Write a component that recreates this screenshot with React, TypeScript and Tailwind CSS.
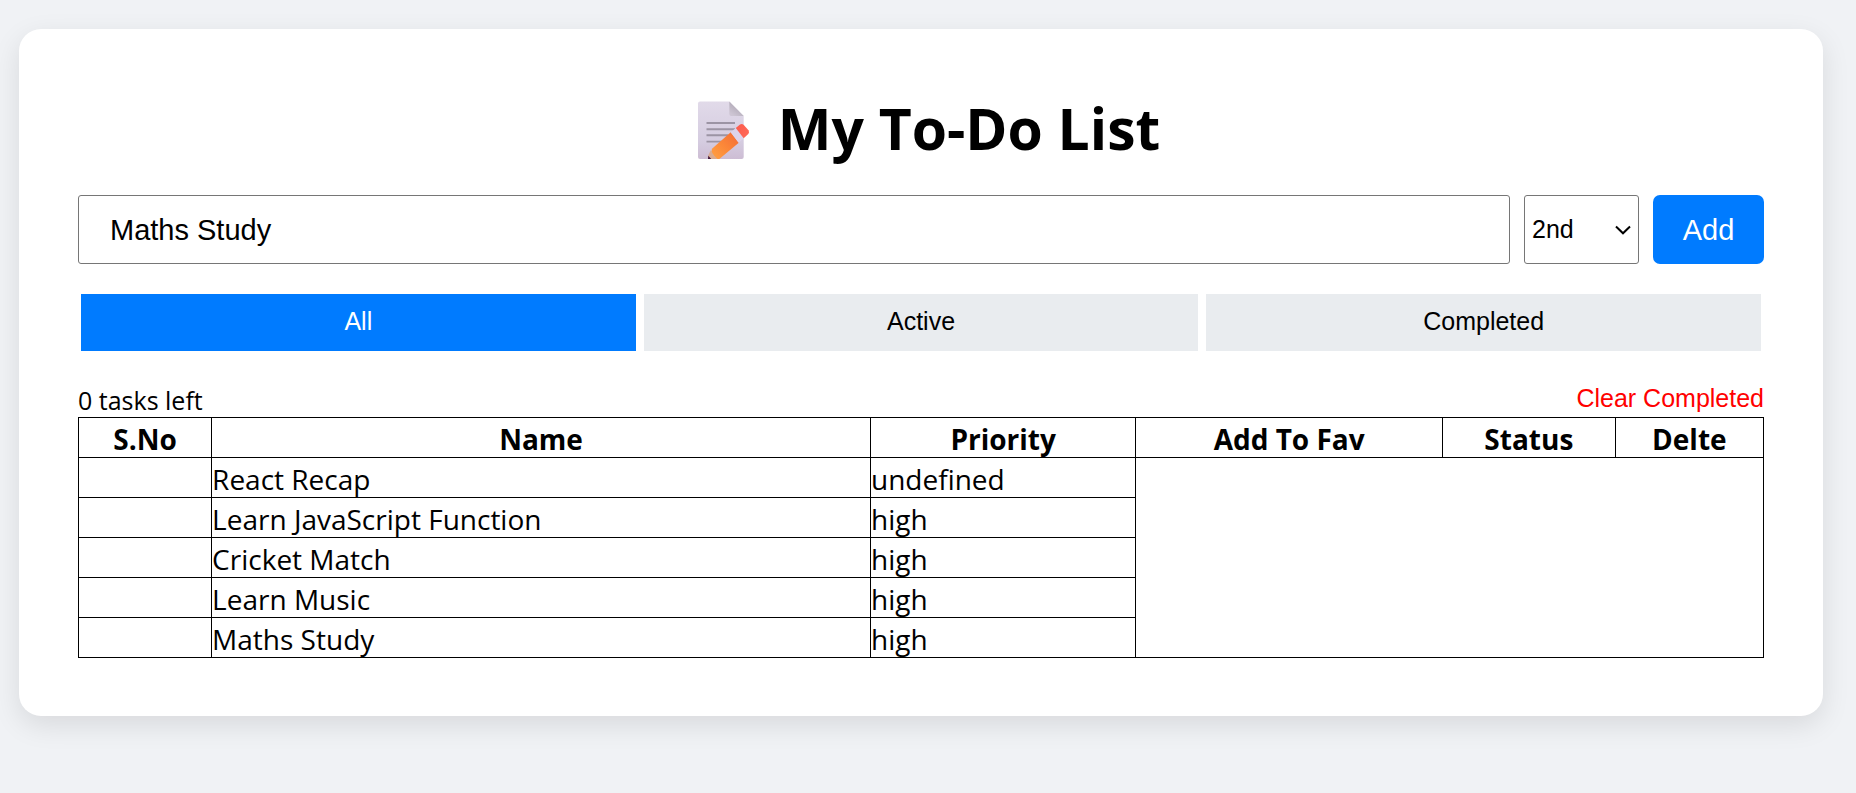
import { useState } from "react";

type Filter = "All" | "Active" | "Completed";

const filters: Filter[] = ["All", "Active", "Completed"];

const tasks = [
  { name: "React Recap", priority: "undefined" },
  { name: "Learn JavaScript Function", priority: "high" },
  { name: "Cricket Match", priority: "high" },
  { name: "Learn Music", priority: "high" },
  { name: "Maths Study", priority: "high" },
];

const columns = [
  { label: "S.No", width: "w-[7.9%]" },
  { label: "Name", width: "w-[39.1%]" },
  { label: "Priority", width: "w-[15.75%]" },
  { label: "Add To Fav", width: "w-[18.2%]" },
  { label: "Status", width: "w-[10.25%]" },
  { label: "Delte", width: "w-[8.8%]" },
];

function MemoIcon() {
  return (
    <svg viewBox="0 0 80 80" className="size-20 shrink-0" aria-hidden="true">
      <defs>
        <linearGradient id="page" x1="0" y1="0" x2="0" y2="1">
          <stop offset="0" stopColor="#e1dae9" />
          <stop offset="0.7" stopColor="#d5cce0" />
          <stop offset="1" stopColor="#cdbdd4" />
        </linearGradient>
        <linearGradient id="fold" x1="0.6" y1="0.35" x2="0.2" y2="0.9">
          <stop offset="0" stopColor="#b3acb9" />
          <stop offset="1" stopColor="#cdc5d3" />
        </linearGradient>
        <linearGradient id="body" x1="0" y1="1" x2="1" y2="0">
          <stop offset="0.1" stopColor="#ff9c40" />
          <stop offset="0.5" stopColor="#fb8638" />
          <stop offset="1" stopColor="#f26a38" />
        </linearGradient>
        <linearGradient id="eraser" x1="0" y1="0" x2="1" y2="0.6">
          <stop offset="0" stopColor="#fb5a4c" />
          <stop offset="1" stopColor="#ff6858" />
        </linearGradient>
      </defs>
      <path d="M18 11.500H47.300L61.700 26V67a2 2 0 0 1-2 2H18a2 2 0 0 1-2-2V13.500a2 2 0 0 1 2-2Z" fill="url(#page)" />
      <path d="M47.300 11.500V24a2 2 0 0 0 2 2H61.700Z" fill="url(#fold)" />
      <path d="M24.500 33H53M24.500 39.200H53M24.500 45.300H46M24.500 51.600H40" stroke="#9c94a4" strokeWidth="1.900" />
      <path d="M28.700 60.200L37.600 69H26V66Z" fill="#d9ab92" />
      <path d="M26.300 65.800L29.200 69H26Z" fill="#41173c" />
      <path d="M30 58.800L48.700 42.300L56.800 52.800L37.300 69H35.500Q28 62.500 30 58.800Z" fill="url(#body)" />
      <path d="M48.700 42.300L53.800 37.900L61.700 48.200L56.600 52.800Z" fill="#ddd3ea" />
      <path d="M53.800 37.900L58 34.600Q60 33.200 61.800 35L66.500 40.300Q67.700 42.300 66.300 44L61.700 48.200Z" fill="url(#eraser)" />
    </svg>
  );
}

export default function App() {
  const [title, setTitle] = useState("Maths Study");
  const [priority, setPriority] = useState("2nd");
  const [active, setActive] = useState<Filter>("All");

  return (
    <div className="min-h-screen bg-[#f0f2f5] pt-[29px] pr-[33px] pb-8 pl-[19px] font-['Open_Sans',sans-serif] text-black">
      <main className="rounded-[22px] bg-white px-[59px] pt-[59px] pb-[58px] shadow-[0_9px_28px_rgba(0,0,0,0.1)]">
        <h1 className="mb-[23px] flex h-[84px] items-center justify-center gap-4 text-[57px] font-bold">
          <MemoIcon />
          <span className="pb-0.5">My To-Do List</span>
        </h1>

        <form
          className="flex h-[69px] gap-[14px] font-['Liberation_Sans',sans-serif]"
          onSubmit={(e) => e.preventDefault()}
        >
          <input
            type="text"
            aria-label="Task"
            value={title}
            onChange={(e) => setTitle(e.target.value)}
            className="min-w-0 flex-1 rounded-[3px] border border-[#767676] bg-white px-[31px] pt-0.5 text-[29px]"
          />
          <div className="relative w-[115px]">
            <select
              aria-label="Priority"
              value={priority}
              onChange={(e) => setPriority(e.target.value)}
              className="size-full appearance-none rounded-[3px] border border-[#767676] bg-white pl-[7px] text-[25px]"
            >
              <option>1st</option>
              <option>2nd</option>
              <option>3rd</option>
            </select>
            <svg
              viewBox="0 0 16 10"
              className="pointer-events-none absolute top-[30px] right-2 h-[10px] w-4"
              fill="none"
              stroke="black"
              strokeWidth="2"
              aria-hidden="true"
            >
              <path d="M1 1.500L8 8.300L15 1.500" />
            </svg>
          </div>
          <button type="submit" className="w-[111px] rounded-[7px] bg-[#007bff] pt-0.5 text-[29px] text-white">
            Add
          </button>
        </form>

        <div className="mx-[3px] mt-[30px] flex gap-2 font-['Liberation_Sans',sans-serif]">
          {filters.map((f) => (
            <button
              key={f}
              type="button"
              aria-pressed={f === active}
              onClick={() => setActive(f)}
              className={
                f === active
                  ? "h-[57px] flex-1 bg-[#007bff] pb-0.5 text-[25px] text-white"
                  : "h-[57px] flex-1 bg-[#e9ecef] pb-0.5 text-[25px] text-black"
              }
            >
              {f}
            </button>
          ))}
        </div>

        <div className="mt-8 flex h-[34px] items-start justify-between">
          <span className="text-[25px] leading-[34px]">0 tasks left</span>
          <button
            type="button"
            className="font-['Liberation_Sans',sans-serif] text-[25px] leading-[30px] text-[#ff0000]"
          >
            Clear Completed
          </button>
        </div>

        <table className="w-full table-fixed border-collapse border border-black text-[28px] leading-[35px]">
          <thead>
            <tr>
              {columns.map((c) => (
                <th key={c.label} scope="col" className={`${c.width} border border-black p-0 pt-1 font-bold`}>
                  {c.label}
                </th>
              ))}
            </tr>
          </thead>
          <tbody>
            {tasks.map((t) => (
              <tr key={t.name}>
                <td className="border border-black p-0" />
                <td className="border border-black p-0 pt-1">{t.name}</td>
                <td className="border border-black p-0 pt-1">{t.priority}</td>
              </tr>
            ))}
          </tbody>
        </table>
      </main>
    </div>
  );
}
